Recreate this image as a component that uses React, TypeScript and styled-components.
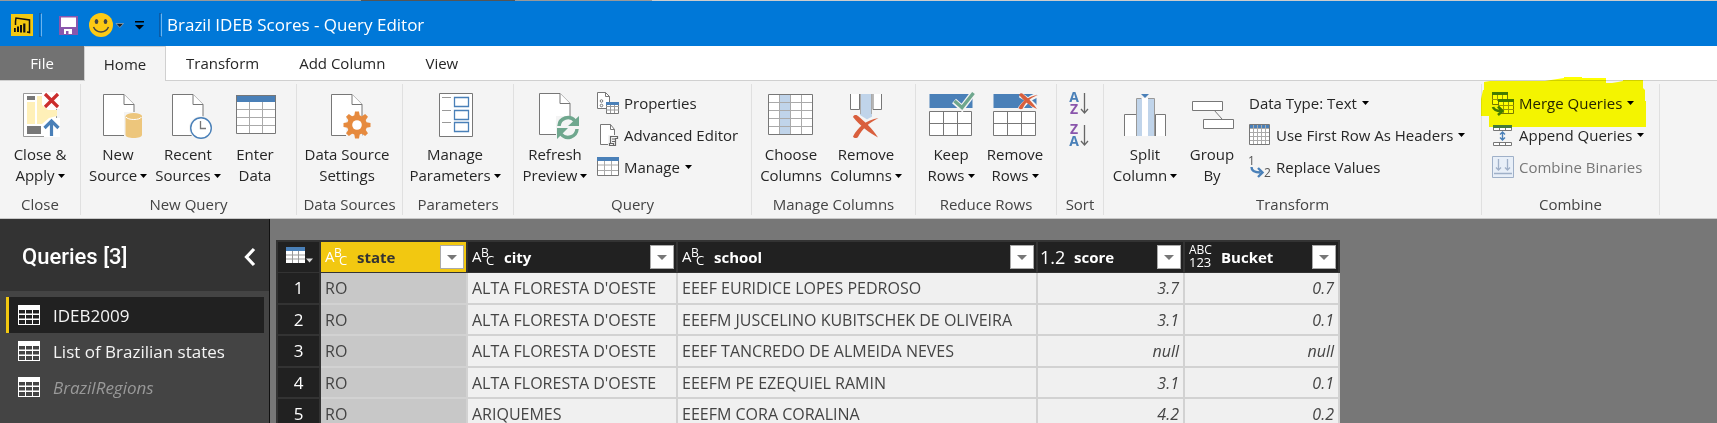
import React from "react";
import styled, { createGlobalStyle } from "styled-components";

const Global = createGlobalStyle`
  *, *::before, *::after { box-sizing: border-box; }
  body { margin: 0; background: #777; font-family: "Open Sans", "Noto Sans", sans-serif; font-size: 15px; color: #262626; }
  button { font: inherit; color: inherit; background: none; border: 0; padding: 0; margin: 0; cursor: pointer; }
  svg { display: block; flex: none; overflow: visible; }
`;

/* ---------- window frame ---------- */
const Window = styled.div`
  height: 100vh;
  display: flex;
  flex-direction: column;
  overflow: hidden;
`;

const TitleBar = styled.header`
  flex: none;
  height: 46px;
  display: flex;
  align-items: center;
  padding: 4px 0 0 11px;
  background:
    linear-gradient(to right, #999 0 21%, #555 21% 30%, #999 30% 38%, #ccc 38%) top / 100% 1px no-repeat,
    #0078d8;
  color: #fff;
`;

const QuickButton = styled.button<{ $gap: number }>`
  display: flex;
  align-items: center;
  margin-right: ${(p) => p.$gap}px;
`;

const TitleDivider = styled.span<{ $gap: number }>`
  width: 3px;
  height: 24px;
  margin-right: ${(p) => p.$gap}px;
  border: 1px solid #0a5ca8;
  border-right-color: #6cb4ee;
`;

const WindowTitle = styled.h1`
  margin: 0;
  font-size: 17px;
  font-weight: 400;
  line-height: 24px;
  white-space: nowrap;
`;

const TabBar = styled.nav`
  flex: none;
  height: 35px;
  display: flex;
  background: #fff;
  border-bottom: 1px solid #d0d0d0;
`;

const Tab = styled.button<{ $kind?: "file" | "active" }>`
  height: ${(p) => (p.$kind === "active" ? 35 : 34)}px;
  min-width: ${(p) => (p.$kind === "file" ? 84 : p.$kind === "active" ? 82 : 0)}px;
  padding: 0 ${(p) => (p.$kind ? 0 : 20)}px;
  white-space: nowrap;
  ${(p) => p.$kind === "file" && "background: #727272; color: #fff;"}
  ${(p) => p.$kind === "active" && "background: #f4f4f4; border: solid #d0d0d0; border-width: 1px 1px 0;"}
`;

/* ---------- ribbon ---------- */
const Ribbon = styled.div`
  flex: none;
  display: flex;
  padding: 3px 0;
  background: #f4f4f4;
  border-bottom: 1px solid #c8c8c8;
`;

const Group = styled.section<{ $width: number }>`
  flex: none;
  width: ${(p) => p.$width}px;
  padding-bottom: 1px;
  display: flex;
  flex-direction: column;
  border-right: 1px solid #e0e0e0;
`;

const GroupBody = styled.div`
  height: 110px;
  display: flex;
  align-items: flex-start;
`;

const GroupLabel = styled.h2`
  margin: 0;
  font-size: 15px;
  font-weight: 400;
  line-height: 20px;
  text-align: center;
  color: #444;
  white-space: nowrap;
`;

const LargeButton = styled.button<{ $width: number }>`
  width: ${(p) => p.$width}px;
  padding-top: 8px;
  display: flex;
  flex-direction: column;
  align-items: center;
  line-height: 21px;
  white-space: nowrap;
  > svg { margin-bottom: 4px; }
`;

const CaptionLine = styled.span`
  display: flex;
  align-items: center;
  gap: 3px;
`;

const SmallStack = styled.div<{ $inset?: number }>`
  padding: 3px 0 0 ${(p) => p.$inset ?? 0}px;
  display: flex;
  flex-direction: column;
  align-items: flex-start;
`;

const SmallButton = styled.button`
  position: relative;
  height: 32px;
  padding-left: 1px;
  display: flex;
  align-items: center;
  gap: 5px;
  white-space: nowrap;
  &:disabled { color: #777; }
`;

const SortStack = styled.div`
  padding: 7px 0 0 11px;
  display: flex;
  flex-direction: column;
  gap: 8px;
`;

const Marker = styled.svg`
  position: absolute;
  left: -10px;
  top: -10px;
  mix-blend-mode: multiply;
  pointer-events: none;
`;

/* ---------- work area ---------- */
const WorkArea = styled.div`
  flex: 1;
  min-height: 0;
  display: flex;
  overflow: hidden;
`;

const Sidebar = styled.aside`
  flex: none;
  width: 270px;
  background: #444;
  border-right: 1px solid #111;
  color: #fff;
`;

const SidebarHeader = styled.div`
  height: 72px;
  padding: 4px 13px 0 22px;
  display: flex;
  align-items: center;
  justify-content: space-between;
  background: #333;
`;

const SidebarTitle = styled.h2`
  margin: 0;
  font-family: Roboto, "Open Sans", sans-serif;
  font-size: 22px;
  font-weight: 500;
  line-height: 24px;
`;

const QueryList = styled.ul`
  list-style: none;
  margin: 0;
  padding: 6px 5px 0 6px;
`;

const QueryItem = styled.button<{ $active?: boolean; $muted?: boolean }>`
  width: 100%;
  height: 36px;
  padding-left: 9px;
  display: flex;
  align-items: center;
  gap: 13px;
  font-size: 17px;
  border-left: 3px solid ${(p) => (p.$active ? "#f2c811" : "transparent")};
  background: ${(p) => (p.$active ? "#212121" : "transparent")};
  span { color: ${(p) => (p.$muted ? "#999" : "#f4f4f4")}; font-style: ${(p) => (p.$muted ? "italic" : "normal")}; }
`;

const Preview = styled.main`
  flex: 1;
  min-width: 0;
  padding: 21px 0 0 6px;
  overflow: hidden;
  background: #777;
`;

const Grid = styled.table`
  width: 1064px;
  table-layout: fixed;
  border-collapse: separate;
  border-spacing: 0;
  border: solid #333;
  border-width: 2px 0 0 2px;
`;

const HeadCell = styled.th<{ $selected?: boolean }>`
  height: 31px;
  padding: 0 2px 0 4px;
  text-align: left;
  font-weight: 700;
  background: ${(p) => (p.$selected ? "#f2c811" : "#212121")};
  color: ${(p) => (p.$selected ? "#333" : "#fff")};
  border: solid #333;
  border-width: 0 2px 1px 0;
`;

const HeadContent = styled.div`
  display: flex;
  align-items: center;
  gap: 9px;
`;

const FilterButton = styled.button`
  width: 24px;
  height: 24px;
  margin-left: auto;
  display: flex;
  align-items: center;
  justify-content: center;
  background: #fff;
  border: 1px solid #aaa;
`;

const Row = styled.tr`
  height: 32px;
  &:nth-child(even) { height: 31px; }
`;

const RowNumber = styled.th`
  padding: 0;
  font-size: 17px;
  font-weight: 400;
  line-height: 20px;
  color: #fff;
  background: #212121;
  border: solid #333;
  border-width: 0 2px 2px 0;
`;

const Cell = styled.td<{ $selected?: boolean; $numeric?: boolean }>`
  padding: 0 4px;
  font-size: 16px;
  line-height: 20px;
  white-space: nowrap;
  color: #444;
  background: ${(p) => (p.$selected ? "#c8c8c8" : "#f0f0f0")};
  border: solid #d2d2d2;
  border-width: 0 2px 2px 0;
  ${(p) => p.$numeric && "text-align: right; font-style: italic;"}
`;

/* ---------- icons ---------- */
const BLUE = "#4a80b8";
const GRAY = "#777";

const Caret = ({ color = "#000" }: { color?: string }) => (
  <svg width="7" height="4" viewBox="0 0 7 4" aria-hidden="true"><path d="M0 0h7L3.500 4z" fill={color} /></svg>
);

const Big = ({ children }: { children: React.ReactNode }) => (
  <svg width="48" height="48" viewBox="0 0 48 48" fill="none" aria-hidden="true">{children}</svg>
);
const Small = ({ children }: { children: React.ReactNode }) => (
  <svg width="22" height="22" viewBox="0 0 22 22" fill="none" aria-hidden="true">{children}</svg>
);

const Page = ({ x = 8.5, y = 2.5 }: { x?: number; y?: number }) => (
  <g transform={`translate(${x} ${y})`} stroke={GRAY} fill="#fff">
    <path d="M0 0h20.500l10 10v31H0z" />
    <path d="M20.500 0v10h10" />
  </g>
);

const CloseApplyIcon = () => (
  <Big>
    <path d="M7.500 1.500h33v43h-33z" fill="#fff" stroke="#999" />
    <path d="M11 4h8v4h-8zM11 34h14v8H11z" fill={GRAY} />
    <path d="M11 10h8v22h-8zM21 4h5v8l6 6h9v6l-8 2-7 6h-5z" fill="#fff0b8" />
    <path d="M26 0h18v17H31l-5-4zM28 34l7-8h9v19H28z" fill="#fff" />
    <path d="M29 2l13 13M42 2L29 15" stroke="#cc2f2f" strokeWidth="3.200" />
    <path d="M35.500 44V30M28.500 36l7-7 7 7" stroke={BLUE} strokeWidth="3.200" />
  </Big>
);
const NewSourceIcon = () => (
  <Big>
    <Page x={9.5} />
    <path d="M30 20h18v26H30z" fill="#f4f4f4" />
    <path d="M31.500 24v19c0 1.700 3.700 3 8.200 3s8.300-1.300 8.300-3V24z" fill="#edc67c" />
    <ellipse cx="39.800" cy="24" rx="8.200" ry="3" fill="#edc67c" />
    <path d="M32 25c1 1.600 4 2.500 7.800 2.500s6.800-.9 7.700-2.500" stroke="#fff" />
  </Big>
);
const RecentIcon = () => (
  <Big>
    <Page />
    <circle cx="37" cy="36" r="12" fill="#f4f4f4" />
    <circle cx="37" cy="36" r="10.300" fill="#fff" stroke={BLUE} strokeWidth="1.400" />
    <path d="M36.500 29v7.500h5.500" stroke={GRAY} strokeWidth="1.300" />
  </Big>
);
const EnterDataIcon = () => (
  <Big>
    <path d="M5.500 3.500h39v38h-39z" fill="#fff" />
    <path d="M5.500 17.500h39M5.500 25.500h39M5.500 33.500h39M18.500 10v31M31.500 10v31" stroke="#aaa" />
    <path d="M5 3h40v7H5z" fill={BLUE} />
    <path d="M5.500 3.500h39v38h-39z" stroke={GRAY} />
  </Big>
);
const SettingsIcon = () => (
  <Big>
    <Page />
    <path d="M23 24h16v20H23z" fill="#f4f4f4" />
    <g fill="#e68a3e">
      {[0, 45, 90, 135, 180, 225, 270, 315].map((a) => (
        <path key={a} d="M31 25l1-5.500h4l1 5.500z" transform={`rotate(${a} 34 33)`} />
      ))}
      <circle cx="34" cy="33" r="10" />
    </g>
    <circle cx="34" cy="33" r="4.800" fill="#fff" />
  </Big>
);
const ParametersIcon = () => (
  <Big>
    <path d="M8.500 1.500h33v43h-33z" fill="#fff" stroke={GRAY} />
    <path d="M11 5.500h9M11 18.500h9M11 30.500h9" stroke="#999" />
    <path d="M23.500 5.500h14v9h-14zM23.500 18.500h14v9h-14zM23.500 30.500h14v9h-14z" stroke={BLUE} strokeWidth="1.300" />
  </Big>
);
const RefreshIcon = () => (
  <Big>
    <Page y={1.500} />
    <path d="M25 24h23v22H25z" fill="#f4f4f4" />
    <path d="M28 34a9 9 0 0 1 16-5M46 37a9 9 0 0 1-16 5" stroke="#6fa78e" strokeWidth="3.500" />
    <path d="M48 24v10H37zM26 47V36h11z" fill="#6fa78e" />
  </Big>
);
const ChooseColumnsIcon = () => (
  <Big>
    <path d="M1.500 2.500h44v40h-44z" fill="#fff" />
    <path d="M12 3h11v39H12z" fill="#c0d4ea" />
    <path d="M1.500 10.500h44M1.500 18.500h44M1.500 26.500h44M1.500 34.500h44M12.500 2v40M23.500 2v40M34.500 2v40" stroke="#aaa" />
    <path d="M1.500 2.500h44v40h-44z" stroke={GRAY} />
  </Big>
);
const RemoveColumnsIcon = () => (
  <Big>
    <path d="M8.500 2v15.500h9V2M31 2v15.500h8.500V2" fill="#fff" stroke={GRAY} />
    <path d="M18 2h12v23l-4 3-8-5z" fill="#c0d4ea" />
    <path d="M18.500 2v20M29.500 2v20" stroke="#aaa" />
    <path d="M13 25c8 5 15 12 23 20M35 26c-9 4-17 11-22 20" stroke="#f4f4f4" strokeWidth="7" />
    <path d="M11 25c1-3 4-2 5-1 6 5 14 12 20 21.500C27 40.500 18 34 11 25z" fill="#d95f3d" />
    <path d="M36.500 26c-10 5-16 11-20.500 19-1 1.500-4 1.500-5-.5C16 35 24 28 36.500 26z" fill="#d95f3d" />
  </Big>
);
const RowsIcon = ({ remove }: { remove?: boolean }) => (
  <Big>
    <path d="M2.500 2h43v14h-43z" fill={BLUE} />
    <path d="M2.500 19.500h42v24h-42z" fill="#fff" stroke={GRAY} />
    <path d="M2.500 31.500h42M16.500 19.500v24M30.500 19.500v24" stroke={GRAY} />
    {remove ? (
      <>
        <path d="M29 3c6 3 12 8 17 14M46 3c-7 3-13 8-17 14" stroke="#f4f4f4" strokeWidth="5" />
        <path d="M28 3c1-2 3-2 4-1 5 4 10 9 14 15-7-3-13-8-18-14z" fill="#d95f3d" />
        <path d="M47 3c-8 3-13 8-15 13-1 2-4 1-4.500 0C31 9 38 4 47 3z" fill="#d95f3d" />
      </>
    ) : (
      <>
        <path d="M27 9l8 7L47 0" stroke="#f4f4f4" strokeWidth="6" />
        <path d="M27.500 9l7.500 6.500L46.500 1" stroke="#6fa78e" strokeWidth="3.400" />
      </>
    )}
  </Big>
);
const SortIcon = ({ top, bottom }: { top: string; bottom: string }) => (
  <svg width="22" height="24" viewBox="0 0 22 24" role="img" aria-label={`Sort ${top} to ${bottom}`}>
    <g fontFamily="Open Sans, sans-serif" fontSize="14" fontWeight="700" textAnchor="middle">
      <text x="6" y="11" fill={top === "A" ? BLUE : "#8a56ac"}>{top}</text>
      <text x="6" y="23" fill={bottom === "A" ? BLUE : "#8a56ac"}>{bottom}</text>
    </g>
    <path d="M16.500 2v20M13 18l3.500 4 3.500-4" fill="none" stroke="#666" strokeWidth="1.300" />
  </svg>
);
const SplitIcon = () => (
  <Big>
    <path d="M3.500 44V22.500h12V44M34.500 44V22.500h10V44" fill="#fff" stroke={GRAY} />
    <path d="M15 6h18v38H15z" fill="#fff" />
    <path d="M16 7h5v37h-5zM27 7h6v37h-6z" fill="#c0d4ea" />
    <path d="M15.500 44V6.500h5M27 6.500h6.500V44" stroke="#999" />
    <path d="M20 2h8l-4 4z" fill={BLUE} />
  </Big>
);
const GroupByIcon = () => (
  <Big>
    <path d="M26 18l8 9" stroke={GRAY} />
    <path d="M4.500 9.500h30v9h-30zM15.500 27.500h30v9h-30z" fill="#fff" stroke={GRAY} />
  </Big>
);

const PropertiesIcon = () => (
  <Small>
    <path d="M.5.500h8l4 4v12H.5z" fill="#fff" stroke={GRAY} />
    <path d="M8.500.500v4h4" stroke={GRAY} />
    <circle cx="4.500" cy="9" r="1.300" stroke={GRAY} /><circle cx="4.500" cy="13.500" r="1.300" stroke={GRAY} />
    <path d="M9.500 10.500h12v11h-12z" fill="#fff" stroke={GRAY} />
    <path d="M9 14.500h13M9 18h13M13.500 13v8M17.500 13v8" stroke="#999" />
    <path d="M9 10h13v3H9z" fill={BLUE} />
  </Small>
);
const EditorIcon = () => (
  <Small>
    <path d="M3.500.500h10l4 5v15h-14z" fill="#fff" stroke={GRAY} />
    <path d="M13.500.500v5h4" stroke={GRAY} />
    <path d="M11 11h11v11H11z" fill="#f4f4f4" />
    <path d="M13.500 19.500v-7h7v2h-2v7h-6v-2h4v2M15 15h3M15 17.500h3" stroke="#666" strokeWidth="1.200" />
  </Small>
);
const TableIcon = () => (
  <Small>
    <path d="M.5 1.500h21v18H.5z" fill="#fff" />
    <path d="M0 9h22M0 14.500h22M7.500 5v14M14.500 5v14" stroke="#aaa" />
    <path d="M.5 1.500h21v18H.5z" stroke={GRAY} />
    <path d="M0 1h22v4H0z" fill={BLUE} />
  </Small>
);
const HeadersIcon = () => (
  <Small>
    <path d="M.5.500h20v20H.5z" fill="#fff" />
    <path d="M1 1h19v3H1z" fill={BLUE} />
    <path d="M0 4.500h21M0 8.500h21M0 12.500h21M0 16.500h21M4.500 0v20M8.500 0v20M12.500 0v20M16.500 0v20" stroke="#aaa" />
    <path d="M.5.500h20v20H.5z" stroke={GRAY} />
  </Small>
);
const ReplaceIcon = () => (
  <Small>
    <g fontFamily="Open Sans, sans-serif" fontSize="12" fill="#555">
      <text x="-1" y="9">1</text><text x="15" y="21">2</text>
    </g>
    <path d="M2.500 11c0 4 3 5.500 9 5.500M9 12l4.500 4.500L9 21" stroke={BLUE} strokeWidth="2.400" />
  </Small>
);
const MergeIcon = () => (
  <Small>
    <path d="M.5.500h15v12H.5z" fill="#fff" stroke="#777" />
    <path d="M0 0h16v3H0z" fill="#437b3a" />
    <path d="M0 7.500h8M5.500 3v6M10.500 3v4" stroke="#999" />
    <path d="M6.500 7.500h15v14h-15z" fill="#fff" stroke="#777" />
    <path d="M6 7h16v3H6z" fill="#437b3a" />
    <path d="M6 13.500h16M6 17.500h16M11.500 10v11M16.500 10v11" stroke="#999" />
    <path d="M0 14h7l5 5-5 4-7-4z" fill="#f4f4f4" />
    <path d="M1 15c1 3.500 4 4 8 4M6 14.500l4.500 4.500L6 23" stroke="#437b3a" strokeWidth="2.600" />
  </Small>
);
const AppendIcon = () => (
  <Small>
    <path d="M1.500 1.500h18v5h-18zM1.500 18.500h18v3h-18z" fill="#fff" stroke={GRAY} />
    <path d="M1 1h19v3H1z" fill="#437b3a" />
    <path d="M7.500 4v2M13.500 4v2M7.500 18v4M13.500 18v4" stroke={GRAY} />
    <path d="M10.500 8v8M8 10.500l2.500-2.500 2.500 2.500M8 13.500l2.500 2.500 2.500-2.500" stroke={BLUE} strokeWidth="1.400" />
  </Small>
);
const BinariesIcon = () => (
  <Small>
    <path d="M.5.500h21v21H.5z" fill="#e8eff8" stroke="#9fb0c8" />
    <path d="M6.500 3v11M4 11.500L6.500 14 9 11.500M15.500 3v11M13 11.500l2.500 2.500 2.500-2.500M2 17.500h18" stroke="#9fb0c8" strokeWidth="1.300" />
  </Small>
);
const QueryIcon = () => (
  <svg width="22" height="20" viewBox="0 0 22 20" aria-hidden="true">
    <path fill="#fff" fillRule="evenodd" d="M0 0h22v20H0zM1 5h6v3.500H1zM8 5h6v3.500H8zM15 5h6v3.500h-6zM1 10h6v3.500H1zM8 10h6v3.500H8zM15 10h6v3.500h-6zM1 15h6v4H1zM8 15h6v4H8zM15 15h6v4h-6z" />
  </svg>
);

type ColumnType = "text" | "decimal" | "any";
const TypeIcon = ({ type }: { type: ColumnType }) => (
  <svg width="23" height="24" viewBox="0 0 23 24" fill="#fff" fontFamily="Open Sans, sans-serif" fontWeight="500" role="img" aria-label={type}>
    {type === "text" && (
      <>
        <text x="0" y="17" fontSize="15">A</text>
        <text x="9" y="12" fontSize="12">B</text>
        <text x="14" y="20" fontSize="13">C</text>
      </>
    )}
    {type === "decimal" && <text x="-2" y="19" fontSize="18">1.2</text>}
    {type === "any" && (
      <>
        <text x="0" y="9" fontSize="12">ABC</text>
        <text x="0" y="22" fontSize="13">123</text>
      </>
    )}
  </svg>
);

/* ---------- composed controls ---------- */
interface LargeProps { icon: React.ReactNode; lines: [string, string]; width: number; menu?: boolean }
const Large = ({ icon, lines, width, menu }: LargeProps) => (
  <LargeButton $width={width} type="button">
    {icon}
    <CaptionLine>{lines[0]}</CaptionLine>
    <CaptionLine>{lines[1]}{menu && <Caret />}</CaptionLine>
  </LargeButton>
);

const RibbonGroup = ({ label, width, children }: { label: string; width: number; children: React.ReactNode }) => (
  <Group $width={width} aria-label={label}>
    <GroupBody>{children}</GroupBody>
    <GroupLabel>{label}</GroupLabel>
  </Group>
);

const columns: { name: string; type: ColumnType; width: number }[] = [
  { name: "state", type: "text", width: 147 },
  { name: "city", type: "text", width: 210 },
  { name: "school", type: "text", width: 360 },
  { name: "score", type: "decimal", width: 147 },
  { name: "Bucket", type: "any", width: 155 },
];

const rows = [
  ["RO", "ALTA FLORESTA D'OESTE", "EEEF EURIDICE LOPES PEDROSO", "3.7", "0.7"],
  ["RO", "ALTA FLORESTA D'OESTE", "EEEFM JUSCELINO KUBITSCHEK DE OLIVEIRA", "3.1", "0.1"],
  ["RO", "ALTA FLORESTA D'OESTE", "EEEF TANCREDO DE ALMEIDA NEVES", "null", "null"],
  ["RO", "ALTA FLORESTA D'OESTE", "EEEFM PE EZEQUIEL RAMIN", "3.1", "0.1"],
  ["RO", "ARIQUEMES", "EEEFM CORA CORALINA", "4.2", "0.2"],
];

export default function App() {
  return (
    <Window>
      <Global />
      <TitleBar>
        <QuickButton $gap={6} type="button" aria-label="Power BI">
          <svg width="22" height="22" viewBox="0 0 22 22">
            <path d="M0 0h22v22H0z" fill="#f2c811" />
            <path d="M4.500 11V7.500L5 4l13.500 2v12.500l-2.500-.5" fill="none" stroke="#111" strokeWidth="1.500" />
            <path d="M3 14h1.800v4H3zM6 12.500h2V18H6zM9 11h2v7.500H9zM12.200 9.500h2.200v9h-2.200z" fill="#111" />
          </svg>
        </QuickButton>
        <TitleDivider $gap={17} />
        <QuickButton $gap={11} type="button" aria-label="Save">
          <svg width="19" height="19" viewBox="0 0 19 19">
            <path d="M0 0h19v19H0z" fill="#8a56ac" />
            <path d="M2 1.500h15v9.500H2zM5 13h8v5H5z" fill="#fff" />
            <path d="M7 15h2.500v3H7z" fill="#8a56ac" />
          </svg>
        </QuickButton>
        <QuickButton $gap={11} type="button" aria-label="Send feedback">
          <svg width="35" height="24" viewBox="0 0 35 24">
            <circle cx="12" cy="12" r="12" fill="#fdca14" />
            <ellipse cx="7.500" cy="8.500" rx="1.800" ry="2.500" fill="#444" />
            <ellipse cx="16.500" cy="8.500" rx="1.800" ry="2.500" fill="#444" />
            <path d="M4.500 14c3 6.500 12 6.500 15 0" fill="none" stroke="#444" strokeWidth="1.500" />
            <path d="M27 10.500h7.500L30.800 14.500z" fill="#222" stroke="#bbb" strokeWidth=".6" />
          </svg>
        </QuickButton>
        <QuickButton $gap={15} type="button" aria-label="Customize toolbar">
          <svg width="9" height="10" viewBox="0 0 9 10"><path d="M0 1h9v1.500H0zM0 5h9L4.500 9.500z" fill="#000" /></svg>
        </QuickButton>
        <TitleDivider $gap={5} />
        <WindowTitle>Brazil IDEB Scores - Query Editor</WindowTitle>
      </TitleBar>

      <TabBar>
        <Tab $kind="file" type="button">File</Tab>
        <Tab $kind="active" type="button">Home</Tab>
        <Tab type="button">Transform</Tab>
        <Tab type="button">Add Column</Tab>
        <Tab type="button">View</Tab>
      </TabBar>

      <Ribbon>
        <RibbonGroup label="Close" width={81}>
          <Large icon={<CloseApplyIcon />} lines={["Close &", "Apply"]} width={80} menu />
        </RibbonGroup>
        <RibbonGroup label="New Query" width={216}>
          <Large icon={<NewSourceIcon />} lines={["New", "Source"]} width={74} menu />
          <Large icon={<RecentIcon />} lines={["Recent", "Sources"]} width={66} menu />
          <Large icon={<EnterDataIcon />} lines={["Enter", "Data"]} width={68} />
        </RibbonGroup>
        <RibbonGroup label="Data Sources" width={106}>
          <Large icon={<SettingsIcon />} lines={["Data Source", "Settings"]} width={100} />
        </RibbonGroup>
        <RibbonGroup label="Parameters" width={111}>
          <Large icon={<ParametersIcon />} lines={["Manage", "Parameters"]} width={104} menu />
        </RibbonGroup>
        <RibbonGroup label="Query" width={238}>
          <Large icon={<RefreshIcon />} lines={["Refresh", "Preview"]} width={82} menu />
          <SmallStack>
            <SmallButton type="button"><PropertiesIcon />Properties</SmallButton>
            <SmallButton type="button"><EditorIcon />Advanced Editor</SmallButton>
            <SmallButton type="button"><TableIcon />Manage<Caret /></SmallButton>
          </SmallStack>
        </RibbonGroup>
        <RibbonGroup label="Manage Columns" width={164}>
          <Large icon={<ChooseColumnsIcon />} lines={["Choose", "Columns"]} width={78} />
          <Large icon={<RemoveColumnsIcon />} lines={["Remove", "Columns"]} width={72} menu />
        </RibbonGroup>
        <RibbonGroup label="Reduce Rows" width={141}>
          <Large icon={<RowsIcon />} lines={["Keep", "Rows"]} width={70} menu />
          <Large icon={<RowsIcon remove />} lines={["Remove", "Rows"]} width={58} menu />
        </RibbonGroup>
        <RibbonGroup label="Sort" width={47}>
          <SortStack>
            <button type="button"><SortIcon top="A" bottom="Z" /></button>
            <button type="button"><SortIcon top="Z" bottom="A" /></button>
          </SortStack>
        </RibbonGroup>
        <RibbonGroup label="Transform" width={378}>
          <Large icon={<SplitIcon />} lines={["Split", "Column"]} width={82} menu />
          <Large icon={<GroupByIcon />} lines={["Group", "By"]} width={52} />
          <SmallStack $inset={10}>
            <SmallButton type="button">Data Type: Text<Caret /></SmallButton>
            <SmallButton type="button"><HeadersIcon />Use First Row As Headers<Caret /></SmallButton>
            <SmallButton type="button"><ReplaceIcon />Replace Values</SmallButton>
          </SmallStack>
        </RibbonGroup>
        <RibbonGroup label="Combine" width={178}>
          <SmallStack $inset={9}>
            <SmallButton type="button">
              <MergeIcon />Merge Queries<Caret />
              <Marker width="166" height="50" viewBox="1481 77 166 50" aria-hidden="true">
                <path
                  fill="#ffff00"
                  d="M1484 82l6-1h55l6-1 13-2v-1h18v1h24v5h6l6-1 5-1v-1h20v8l2 2v11h1v26h-157v-11h-8v-17l2-9h1z"
                />
              </Marker>
            </SmallButton>
            <SmallButton type="button"><AppendIcon />Append Queries<Caret /></SmallButton>
            <SmallButton type="button" disabled><BinariesIcon />Combine Binaries</SmallButton>
          </SmallStack>
        </RibbonGroup>
      </Ribbon>

      <WorkArea>
        <Sidebar>
          <SidebarHeader>
            <SidebarTitle>Queries [3]</SidebarTitle>
            <button type="button" aria-label="Collapse pane">
              <svg width="12" height="18" viewBox="0 0 12 18"><path d="M10 1L2.500 9l7.500 8" fill="none" stroke="#fff" strokeWidth="3.200" /></svg>
            </button>
          </SidebarHeader>
          <QueryList>
            <li><QueryItem $active type="button"><QueryIcon /><span>IDEB2009</span></QueryItem></li>
            <li><QueryItem type="button"><QueryIcon /><span>List of Brazilian states</span></QueryItem></li>
            <li><QueryItem $muted type="button"><QueryIcon /><span>BrazilRegions</span></QueryItem></li>
          </QueryList>
        </Sidebar>
        <Preview>
          <Grid>
            <colgroup>
              <col width={43} />
              {columns.map((c) => <col key={c.name} width={c.width} />)}
            </colgroup>
            <thead>
              <tr>
                <HeadCell>
                  <button type="button" aria-label="Table options">
                    <svg width="36" height="18" viewBox="0 0 36 18">
                      <path d="M4 1h19v16H4z" fill="#fff" />
                      <path d="M4 1h19v4H4z" fill={BLUE} />
                      <path d="M4 9h19M4 13h19M10.500 5v12M16.500 5v12" stroke="#999" />
                      <path d="M24 12.500h7L27.500 16.500z" fill="#ddd" />
                    </svg>
                  </button>
                </HeadCell>
                {columns.map((c, i) => (
                  <HeadCell key={c.name} $selected={i === 0} scope="col">
                    <HeadContent>
                      <TypeIcon type={c.type} />
                      {c.name}
                      <FilterButton type="button" aria-label={`Filter ${c.name}`}>
                        <svg width="10" height="5" viewBox="0 0 10 5"><path d="M0 0h10L5 5z" fill="#777" /></svg>
                      </FilterButton>
                    </HeadContent>
                  </HeadCell>
                ))}
              </tr>
            </thead>
            <tbody>
              {rows.map((r, n) => (
                <Row key={n}>
                  <RowNumber scope="row">{n + 1}</RowNumber>
                  {r.map((v, i) => (
                    <Cell key={i} $selected={i === 0} $numeric={i > 2}>{v}</Cell>
                  ))}
                </Row>
              ))}
            </tbody>
          </Grid>
        </Preview>
      </WorkArea>
    </Window>
  );
}
